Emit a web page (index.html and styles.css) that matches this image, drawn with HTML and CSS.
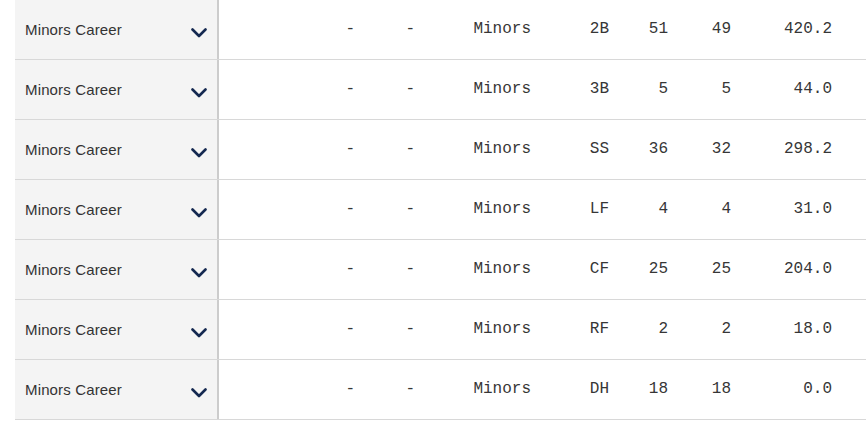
FILE: index.html
```html
<!DOCTYPE html>
<html>
<head>
<meta charset="utf-8">
<link rel="stylesheet" href="styles.css">
</head>
<body>
<div class="table">
  <div class="row">
    <div class="label"><span>Minors Career</span><svg class="chev" viewBox="0 0 16 10" width="16" height="10"><polyline points="1.5,1.5 8,8 14.5,1.5"/></svg></div>
    <div class="c c1">-</div><div class="c c2">-</div><div class="c c3">Minors</div><div class="c c4">2B</div><div class="c c5">51</div><div class="c c6">49</div><div class="c c7">420.2</div><div class="c"></div>
  </div>
  <div class="row">
    <div class="label"><span>Minors Career</span><svg class="chev" viewBox="0 0 16 10" width="16" height="10"><polyline points="1.5,1.5 8,8 14.5,1.5"/></svg></div>
    <div class="c c1">-</div><div class="c c2">-</div><div class="c c3">Minors</div><div class="c c4">3B</div><div class="c c5">5</div><div class="c c6">5</div><div class="c c7">44.0</div><div class="c"></div>
  </div>
  <div class="row">
    <div class="label"><span>Minors Career</span><svg class="chev" viewBox="0 0 16 10" width="16" height="10"><polyline points="1.5,1.5 8,8 14.5,1.5"/></svg></div>
    <div class="c c1">-</div><div class="c c2">-</div><div class="c c3">Minors</div><div class="c c4">SS</div><div class="c c5">36</div><div class="c c6">32</div><div class="c c7">298.2</div><div class="c"></div>
  </div>
  <div class="row">
    <div class="label"><span>Minors Career</span><svg class="chev" viewBox="0 0 16 10" width="16" height="10"><polyline points="1.5,1.5 8,8 14.5,1.5"/></svg></div>
    <div class="c c1">-</div><div class="c c2">-</div><div class="c c3">Minors</div><div class="c c4">LF</div><div class="c c5">4</div><div class="c c6">4</div><div class="c c7">31.0</div><div class="c"></div>
  </div>
  <div class="row">
    <div class="label"><span>Minors Career</span><svg class="chev" viewBox="0 0 16 10" width="16" height="10"><polyline points="1.5,1.5 8,8 14.5,1.5"/></svg></div>
    <div class="c c1">-</div><div class="c c2">-</div><div class="c c3">Minors</div><div class="c c4">CF</div><div class="c c5">25</div><div class="c c6">25</div><div class="c c7">204.0</div><div class="c"></div>
  </div>
  <div class="row">
    <div class="label"><span>Minors Career</span><svg class="chev" viewBox="0 0 16 10" width="16" height="10"><polyline points="1.5,1.5 8,8 14.5,1.5"/></svg></div>
    <div class="c c1">-</div><div class="c c2">-</div><div class="c c3">Minors</div><div class="c c4">RF</div><div class="c c5">2</div><div class="c c6">2</div><div class="c c7">18.0</div><div class="c"></div>
  </div>
  <div class="row">
    <div class="label"><span>Minors Career</span><svg class="chev" viewBox="0 0 16 10" width="16" height="10"><polyline points="1.5,1.5 8,8 14.5,1.5"/></svg></div>
    <div class="c c1">-</div><div class="c c2">-</div><div class="c c3">Minors</div><div class="c c4">DH</div><div class="c c5">18</div><div class="c c6">18</div><div class="c c7">0.0</div><div class="c"></div>
  </div>
</div>
</body>
</html>
```

FILE: styles.css
```css
html, body {
  margin: 0;
  padding: 0;
  background: #fff;
}
.table {
  padding-left: 15px;
}
.row {
  display: grid;
  grid-template-columns: 204px 136px 60px 116px 78px 59px 63px 101px 1fr;
  height: 59px;
  border-bottom: 1px solid #d8d8d8;
}
.label {
  background: #f4f4f4;
  border-right: 2px solid #cccccc;
  display: flex;
  align-items: center;
  justify-content: space-between;
  padding: 0 10px 0 10px;
  font-family: "Liberation Sans", Arial, sans-serif;
  font-size: 15px;
  letter-spacing: 0.15px;
  color: #333;
}
.label span {
  margin-top: -1px;
}
.chev {
  margin-top: 6px;
}
.chev polyline {
  fill: none;
  stroke: #142850;
  stroke-width: 2.6;
  stroke-linecap: round;
  stroke-linejoin: round;
}
.c {
  font-family: "Liberation Mono", "Courier New", monospace;
  font-size: 16px;
  color: #363636;
  text-align: right;
  line-height: 16px;
  padding-top: 21px;
  white-space: nowrap;
}
```
